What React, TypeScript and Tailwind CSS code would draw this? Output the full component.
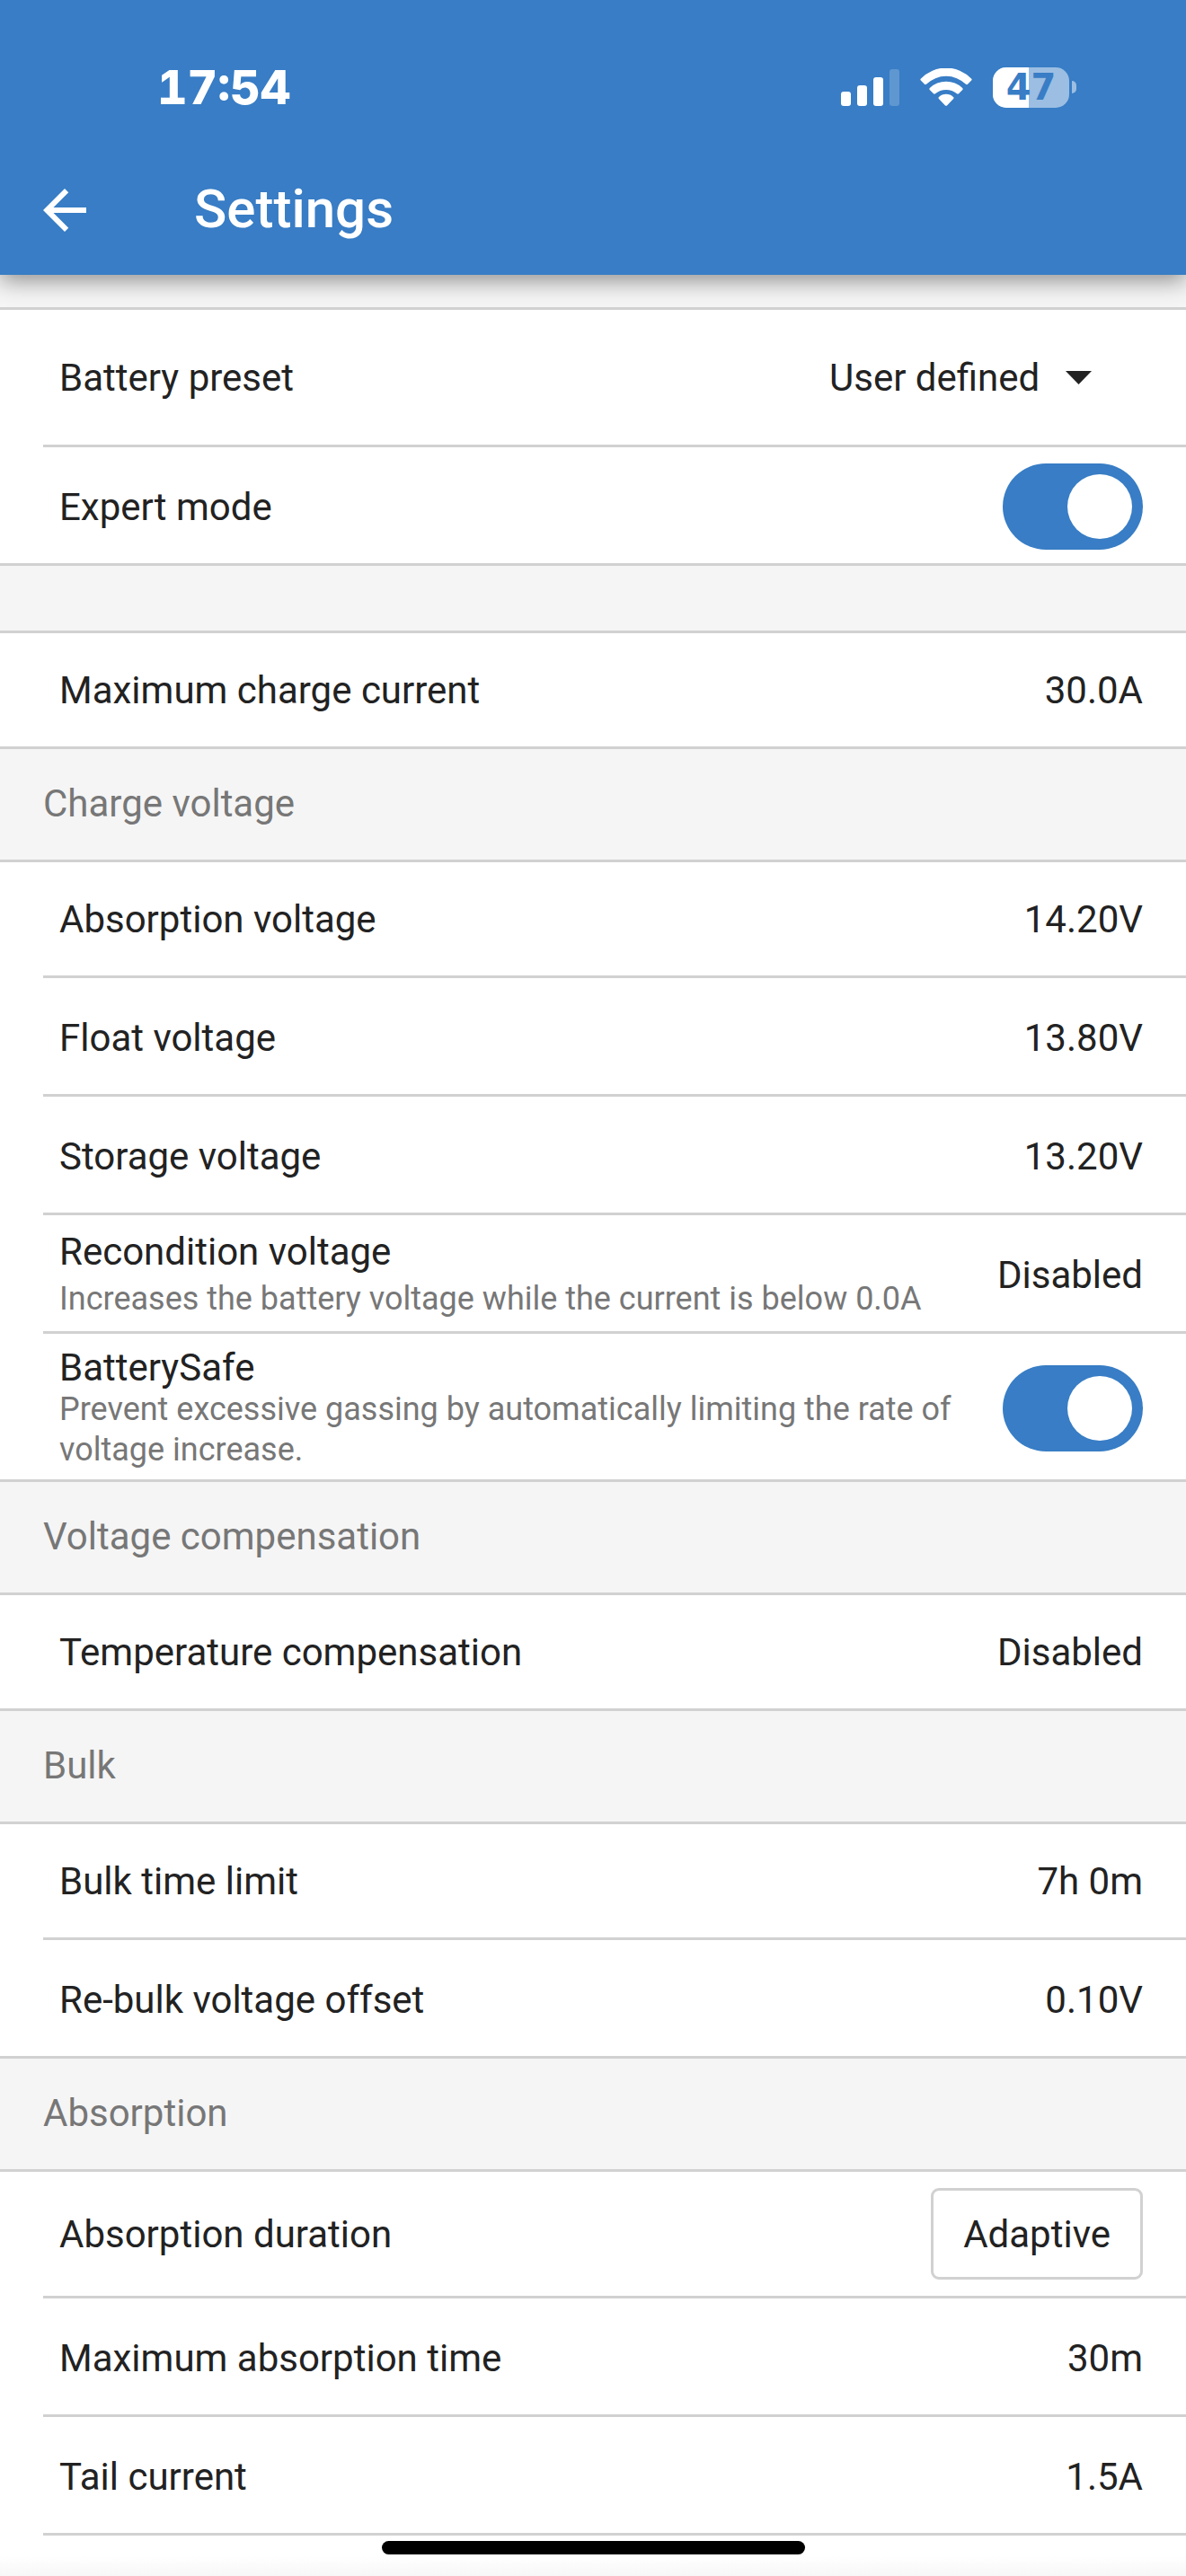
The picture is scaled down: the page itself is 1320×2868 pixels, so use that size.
import React, { useState } from "react";

const SignalIcon = () => (
  <svg width="65" height="41" viewBox="0 0 65 41" fill="currentColor" aria-hidden="true">
    <rect x="0" y="25" width="11" height="16" rx="3" />
    <rect x="18" y="18" width="11" height="23" rx="3" />
    <rect x="36" y="9" width="11" height="32" rx="3" />
    <rect x="54" y="0" width="11" height="41" rx="3" opacity="0.2" />
  </svg>
);

const WifiIcon = () => (
  <svg width="58" height="42" viewBox="0 0 58 42" fill="currentColor" aria-hidden="true">
    <path d="M1 11.5A38.7 38.7 0 0 1 57 11.5q1.2 1 .2 2L53 17.8q-1 .8-2 0A31.4 31.4 0 0 0 7 17.8q-1 .8-2 0L.8 13.5q-1-1 .2-2z" />
    <path d="M10.8 22A26.3 26.3 0 0 1 47.2 22q1 1 .1 2L43 28.3q-1 .8-2 0A18.5 18.5 0 0 0 17 28.3q-1 .8-2 0L10.7 24q-.9-1 .1-2z" />
    <path d="M21 32A11.4 11.4 0 0 1 37 32q1 .9.1 1.9L30 41.4q-1 .9-2 0L20.9 33.9q-.9-1 .1-1.9z" />
  </svg>
);

const Battery = ({ level }: { level: number }) => (
  <div className="flex items-center gap-[3px]">
    <div className="relative flex h-[45px] w-[85px] items-center justify-center overflow-hidden rounded-[15px] bg-white/50">
      <div className="absolute inset-y-0 left-0 bg-white" style={{ width: `${level}%` }} />
      <span className="relative font-['DejaVu_Sans'] text-[40px] leading-none font-bold text-[#387dc5]">
        {level}
      </span>
    </div>
    <div className="h-[14px] w-[5px] rounded-r-full bg-white/50" />
  </div>
);

const Header = () => (
  <header className="relative z-10 bg-[#387dc5] text-white shadow-[0_6px_24px_rgba(0,0,0,0.43)]">
    <div className="flex h-[162px] items-center justify-between pt-8 pr-[122px] pl-[175px]">
      <span className="pt-[2px] font-['Inter'] text-[52px] leading-none font-extrabold tabular-nums">17:54</span>
      <div className="flex items-center gap-[23px]">
        <SignalIcon />
        <WifiIcon />
        <Battery level={47} />
      </div>
    </div>
    <div className="flex h-[144px] items-center gap-[120px] px-12">
      <button type="button" aria-label="Back">
        <svg width="48" height="48" viewBox="4 4 16 16" fill="currentColor" aria-hidden="true">
          <path d="M20 11H7.83l5.59-5.59L12 4l-8 8 8 8 1.41-1.41L7.83 13H20v-2z" />
        </svg>
      </button>
      <h1 className="pb-[2px] text-[60px] leading-none font-medium">Settings</h1>
    </div>
  </header>
);

const SectionTitle = ({ children }: { children: React.ReactNode }) => (
  <h2 className="flex h-[123px] items-center px-12 pb-[2px] text-[#777777]">{children}</h2>
);

const Section = ({ title, children }: { title?: string; children: React.ReactNode }) => (
  <section>
    {title && <SectionTitle>{title}</SectionTitle>}
    <div className="border-y-[3px] border-[#d1d1d1] bg-white">{children}</div>
  </section>
);

type RowProps = {
  label: string;
  htmlFor?: string;
  first?: boolean;
  className?: string;
  children: React.ReactNode;
  hint?: React.ReactNode;
};

const Row = ({ label, htmlFor, first, className = "min-h-[129px]", hint, children }: RowProps) => (
  <div className="pl-12">
    <div
      className={`flex items-center justify-between gap-12 pr-12 pl-[18px] ${className} ${
        first ? "" : "box-content border-t-[3px] border-[#d1d1d1]"
      }`}
    >
      <div className={first ? "" : "pt-[3px]"}>
        <label htmlFor={htmlFor} className="block">
          {label}
        </label>
        {hint}
      </div>
      <div className={first ? "shrink-0" : "shrink-0 pt-[3px]"}>{children}</div>
    </div>
  </div>
);

const Toggle = ({ id, defaultChecked }: { id: string; defaultChecked?: boolean }) => {
  const [on, setOn] = useState(!!defaultChecked);
  return (
    <input
      id={id}
      type="checkbox"
      role="switch"
      checked={on}
      onChange={(e) => setOn(e.target.checked)}
      className="flex h-[96px] w-[156px] appearance-none items-center rounded-full bg-gray-400 p-3 before:block before:size-[72px] before:rounded-full before:bg-white checked:justify-end checked:bg-[#387dc5]"
    />
  );
};

export default function App() {
  return (
    <div className="flex min-h-screen flex-col bg-[#f5f5f5] font-['Roboto',sans-serif] text-[42px] leading-[49px] text-[#222222]">
      <Header />

      <main className="pt-9">
        <Section>
          <Row label="Battery preset" htmlFor="preset" first className="min-h-[150px]">
            <div className="relative flex items-center">
              <select id="preset" className="appearance-none bg-transparent pr-[114px]">
                <option>User defined</option>
              </select>
              <svg
                className="pointer-events-none absolute right-[57px]"
                width="29"
                height="15"
                viewBox="0 0 29 15"
                fill="currentColor"
                aria-hidden="true"
              >
                <path d="M0 0h29L14.5 15z" />
              </svg>
            </div>
          </Row>
          <Row label="Expert mode" htmlFor="expert">
            <Toggle id="expert" defaultChecked />
          </Row>
        </Section>

        <div className="h-[72px]" />

        <Section>
          <Row label="Maximum charge current" first className="min-h-[126px]">30.0A</Row>
        </Section>

        <Section title="Charge voltage">
          <Row label="Absorption voltage" first className="min-h-[126px]">14.20V</Row>
          <Row label="Float voltage">13.80V</Row>
          <Row label="Storage voltage">13.20V</Row>
          <Row
            label="Recondition voltage"
            hint={
              <p className="mt-[6px] text-[36px] leading-[45px] text-[#777777]">
                Increases the battery voltage while the current is below 0.0A
              </p>
            }
          >
            Disabled
          </Row>
          <Row
            label="BatterySafe"
            htmlFor="batterysafe"
            className="min-h-[162px]"
            hint={
              <p className="text-[36px] leading-[45px] text-[#777777]">
                Prevent excessive gassing by automatically limiting the rate of voltage increase.
              </p>
            }
          >
            <Toggle id="batterysafe" defaultChecked />
          </Row>
        </Section>

        <Section title="Voltage compensation">
          <Row label="Temperature compensation" first className="min-h-[126px]">Disabled</Row>
        </Section>

        <Section title="Bulk">
          <Row label="Bulk time limit" first className="min-h-[126px]">7h 0m</Row>
          <Row label="Re-bulk voltage offset">0.10V</Row>
        </Section>

        <section>
          <SectionTitle>Absorption</SectionTitle>
          <div className="border-t-[3px] border-[#d1d1d1] bg-white">
            <Row label="Absorption duration" htmlFor="duration" first className="min-h-[138px]">
              <button
                id="duration"
                type="button"
                className="block h-[102px] rounded-[9px] border-[3px] border-[#d1d1d1] px-[33px]"
              >
                Adaptive
              </button>
            </Row>
            <Row label="Maximum absorption time">30m</Row>
            <Row label="Tail current">1.5A</Row>
            <div className="ml-12 border-t-[3px] border-[#d1d1d1]" />
          </div>
        </section>
      </main>

      <footer className="flex flex-1 justify-center bg-linear-to-b from-white from-50% to-[#f7f7f7] pt-[6px] pb-6">
        <div className="h-[15px] w-[471px] rounded-full bg-black" />
      </footer>
    </div>
  );
}
